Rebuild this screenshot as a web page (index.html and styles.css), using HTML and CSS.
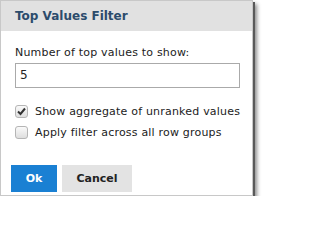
FILE: index.html
```html
<!DOCTYPE html>
<html>
<head>
<meta charset="utf-8">
<link rel="stylesheet" href="styles.css">
</head>
<body>
<div class="dialog">
  <div class="header">Top Values Filter</div>
  <div class="body">
    <div class="label">Number of top values to show:</div>
    <div class="input">5</div>
    <div class="checks">
      <div class="check">
        <span class="box"><svg width="11" height="11" viewBox="0 0 11 11"><path d="M2 5.5 L4.5 8 L9 2.5" fill="none" stroke="#333" stroke-width="2"/></svg></span>
        <span class="text">Show aggregate of unranked values</span>
      </div>
      <div class="check">
        <span class="box"></span>
        <span class="text">Apply filter across all row groups</span>
      </div>
    </div>
  </div>
  <div class="footer">
    <div class="btn ok">Ok</div>
    <div class="btn cancel">Cancel</div>
  </div>
</div>
</body>
</html>
```
FILE: styles.css
```css
html, body { margin: 0; padding: 0; background: #fff; }
body { font-family: "DejaVu Sans", Verdana, sans-serif; font-size: 11px; letter-spacing: 0.2px; color: #222; }
.dialog {
  width: 251px;
  height: 194px;
  border: 1px solid #c8c8c8;
  background: #fff;
  box-shadow: 2px 2px 0 #5a5a5a, 4px 4px 4px rgba(0,0,0,0.45);
  display: flex;
  flex-direction: column;
}
.header {
  height: 30px;
  background: #e1e1e1;
  color: #2c4c6c;
  font-weight: bold;
  font-size: 12px;
  letter-spacing: 0;
  line-height: 30px;
  padding-left: 14px;
}
.body { padding: 15px 12px 0 14px; }
.label { line-height: 14px; height: 14px; white-space: nowrap; }
.input {
  margin-top: 3px;
  height: 23px;
  border: 1px solid #aaa;
  line-height: 23px;
  padding-left: 4px;
  font-size: 12px;
}
.checks { margin-top: 17px; display: flex; flex-direction: column; gap: 8px; }
.check { display: flex; align-items: center; gap: 7px; height: 13px; }
.text { white-space: nowrap; }
.box {
  flex: none;
  width: 11px; height: 11px;
  border: 1px solid #b5b5b5;
  border-radius: 3px;
  background: linear-gradient(#fafafa, #dedede);
  display: flex; align-items: center; justify-content: center;
}
.box svg { display: block; }
.footer { margin-top: auto; padding: 0 0 3px 10px; display: flex; gap: 5px; }
.btn {
  height: 27px; line-height: 27px;
  font-weight: bold; font-size: 11px;
  letter-spacing: 0;
  text-align: center;
}
.ok { width: 46px; background: #1a80d3; color: #fff; }
.cancel { width: 70px; background: #e3e3e3; color: #222; }
```
